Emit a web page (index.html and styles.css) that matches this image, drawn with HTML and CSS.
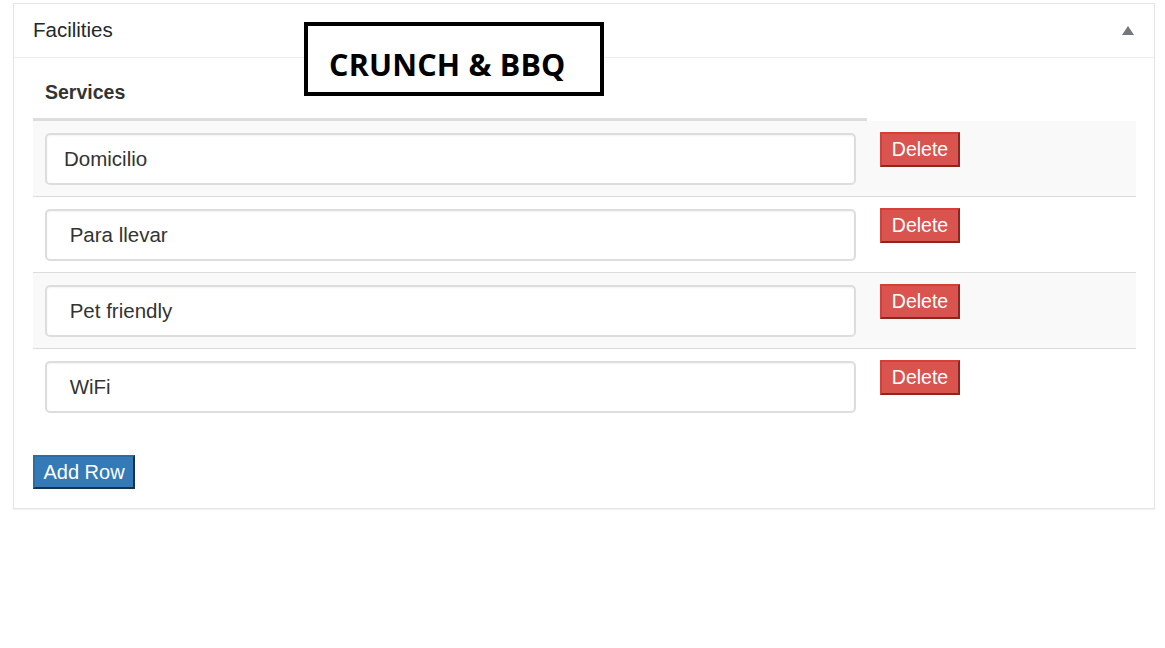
FILE: index.html
```html
<!DOCTYPE html>
<html>
<head>
<meta charset="utf-8">
<link rel="stylesheet" href="styles.css">
</head>
<body>
<div class="panel">
  <div class="panel-head">
    <h2 class="panel-title">Facilities</h2>
    <span class="toggle" aria-hidden="true"></span>
  </div>
  <div class="panel-body">
    <table class="rows">
      <colgroup><col class="col-main"><col class="col-act"></colgroup>
      <thead>
        <tr><th class="th-main"><div class="th-in">Services</div></th><th class="th-act"></th></tr>
      </thead>
      <tbody>
        <tr class="odd"><td><div class="cell cell-main"><input class="field" type="text" value="Domicilio"></div></td><td><div class="cell cell-act"><button class="btn btn-del">Delete</button></div></td></tr>
        <tr><td><div class="cell cell-main"><input class="field" type="text" value=" Para llevar"></div></td><td><div class="cell cell-act"><button class="btn btn-del">Delete</button></div></td></tr>
        <tr class="odd"><td><div class="cell cell-main"><input class="field" type="text" value=" Pet friendly"></div></td><td><div class="cell cell-act"><button class="btn btn-del">Delete</button></div></td></tr>
        <tr><td><div class="cell cell-main"><input class="field" type="text" value=" WiFi"></div></td><td><div class="cell cell-act"><button class="btn btn-del">Delete</button></div></td></tr>
      </tbody>
    </table>
    <button class="btn btn-add">Add Row</button>
  </div>
</div>
<div class="label-box">CRUNCH &amp; BBQ</div>
</body>
</html>
```
FILE: styles.css
```css
html, body {
  margin: 0;
  padding: 0;
  background: #fff;
}
body {
  font-family: "Liberation Sans", Arial, sans-serif;
  color: #333;
  position: relative;
  width: 1165px;
  height: 648px;
  overflow: hidden;
}
.panel {
  margin: 3px 0 0 13px;
  width: 1140px;
  border: 1px solid #e5e5e5;
  box-shadow: 0 1px 1px rgba(0,0,0,0.05);
  background: #fff;
}
.panel-head {
  height: 53px;
  border-bottom: 1px solid #eee;
  display: flex;
  align-items: center;
  justify-content: space-between;
  padding: 0 20px 0 19px;
}
.panel-title {
  margin: 0;
  font-size: 20.5px;
  font-weight: normal;
  color: #23282d;
  line-height: 1;
  padding-bottom: 1px;
}
.toggle {
  width: 0;
  height: 0;
  border-left: 6px solid transparent;
  border-right: 6px solid transparent;
  border-bottom: 9px solid #72777c;
  margin-bottom: 1px;
}
.panel-body {
  padding: 0 0 19px 19px;
}
.rows {
  border-collapse: separate;
  border-spacing: 0;
  table-layout: fixed;
  width: 1103px;
}
.col-main { width: 834px; }
.col-act { width: 269px; }
.rows th {
  text-align: left;
  padding: 0;
  vertical-align: top;
}
.th-main {
  border-bottom: 3px solid #ddd;
}
.th-in {
  box-sizing: border-box;
  height: 60px;
  padding: 9px 0 0 12px;
  display: flex;
  align-items: center;
  font-size: 19.5px;
  font-weight: bold;
  color: #333;
}
.rows td {
  padding: 0;
  vertical-align: top;
  border-top: 1px solid #ddd;
}
.rows tbody tr:first-child td {
  border-top: none;
}
.rows tr.odd td {
  background: #f9f9f9;
}
.cell {
  box-sizing: border-box;
  height: 75px;
}
.cell-main {
  padding: 12px 0 0 12px;
}
.cell-act {
  padding: 11px 0 0 13px;
}
.field {
  box-sizing: border-box;
  width: 811px;
  height: 52px;
  border: 2px solid #ddd;
  border-radius: 5px;
  box-shadow: inset 0 1px 2px rgba(0,0,0,0.05);
  font-family: "Liberation Sans", Arial, sans-serif;
  font-size: 20.5px;
  color: #333;
  padding: 0 17px;
  background: #fff;
  display: block;
  outline: none;
}
.btn {
  font-family: "Liberation Sans", Arial, sans-serif;
  color: #fff;
  border-style: solid;
  border-width: 2px;
  padding: 0;
  margin: 0;
  cursor: pointer;
  line-height: 1;
  display: block;
}
.btn-del {
  width: 80px;
  height: 35px;
  font-size: 19.5px;
  background: #d9534f;
  border-color: #d43f3a #8b2623 #8b2623 #d43f3a;
}
.btn-add {
  margin-top: 31px;
  width: 102px;
  height: 34px;
  font-size: 20px;
  background: #337ab7;
  border-color: #2e6da4 #15334d #15334d #2e6da4;
}
.label-box {
  position: absolute;
  left: 304px;
  top: 22px;
  box-sizing: content-box;
  width: 271px;
  height: 56px;
  padding: 10px 0 0 21px;
  border: 4px solid #000;
  background: #fff;
  font-family: "Open Sans", "Noto Sans", sans-serif;
  font-weight: 700;
  font-size: 30.5px;
  letter-spacing: 0.2px;
  color: #000;
  display: flex;
  align-items: center;
}
```
